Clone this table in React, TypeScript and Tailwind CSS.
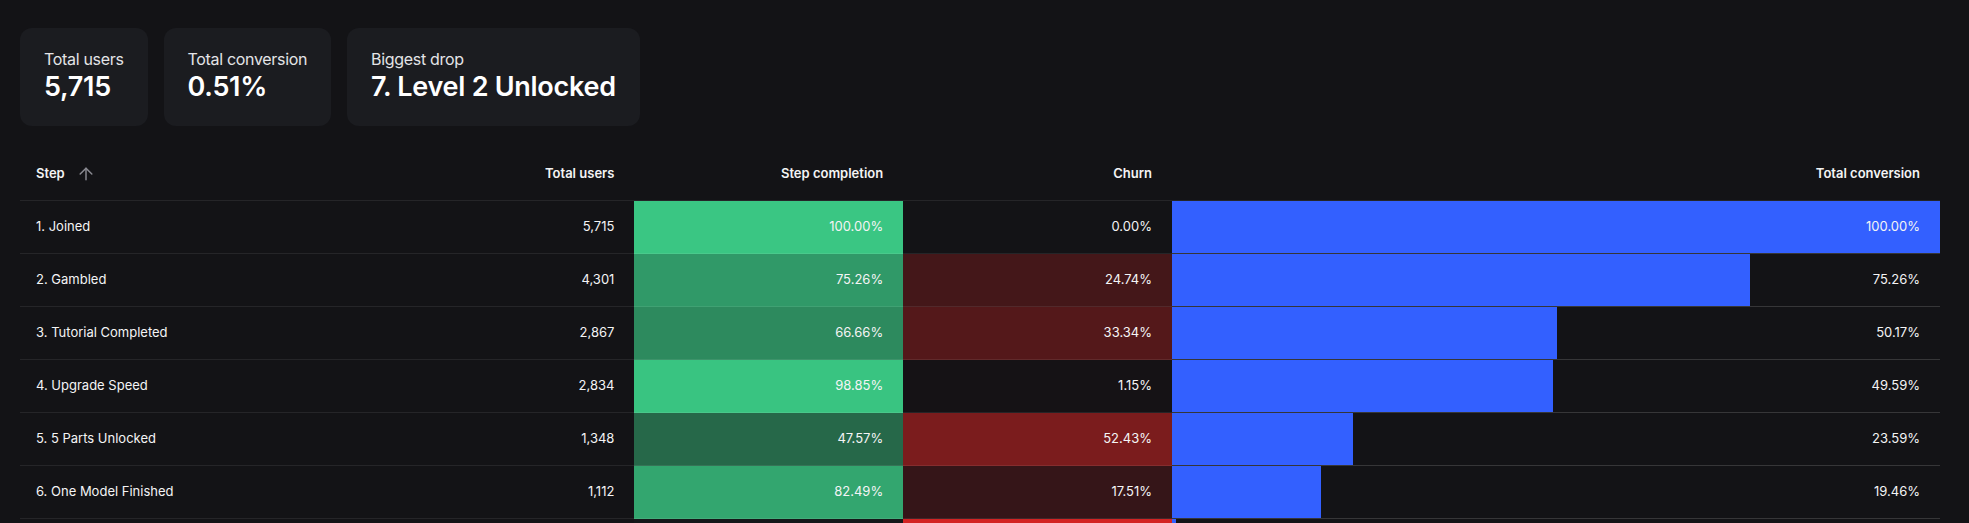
import { ArrowUp } from "lucide-react";

type Step = {
  name: string;
  users: string;
  completion: number;
  churn: number;
  conversion: number;
};

const steps: Step[] = [
  { name: "1. Joined", users: "5,715", completion: 100, churn: 0, conversion: 100 },
  { name: "2. Gambled", users: "4,301", completion: 75.26, churn: 24.74, conversion: 75.26 },
  { name: "3. Tutorial Completed", users: "2,867", completion: 66.66, churn: 33.34, conversion: 50.17 },
  { name: "4. Upgrade Speed", users: "2,834", completion: 98.85, churn: 1.15, conversion: 49.59 },
  { name: "5. 5 Parts Unlocked", users: "1,348", completion: 47.57, churn: 52.43, conversion: 23.59 },
  { name: "6. One Model Finished", users: "1,112", completion: 82.49, churn: 17.51, conversion: 19.46 },
  { name: "7. Level 2 Unlocked", users: "29", completion: 2.61, churn: 97.39, conversion: 0.51 },
];

function StatCard({ label, value }: { label: string; value: string }) {
  return (
    <div className="rounded-xl bg-[#1b1c20] px-6 pt-[19px] pb-[23px]">
      <div className="text-[16px] leading-6 tracking-[-0.02em] text-[#e4e4e7]">{label}</div>
      <div className="text-[27px] font-semibold leading-8 tracking-[-0.01em] text-white">{value}</div>
    </div>
  );
}

const cell = "h-[53px] flex items-center border-b border-white/[0.08] text-[13px]";

export default function App() {
  return (
    <div
      className="h-[523px] overflow-hidden bg-[#131316] pl-5 pr-[29px] pt-7 text-[#f4f4f5]"
      style={{ fontFamily: "Inter, 'Noto Sans', sans-serif" }}
    >
      <div className="flex gap-4">
        <StatCard label="Total users" value="5,715" />
        <StatCard label="Total conversion" value="0.51%" />
        <StatCard label="Biggest drop" value="7. Level 2 Unlocked" />
      </div>

      <div className="mt-[22px] w-full">
        {/* Header */}
        <div className="flex font-semibold">
          <div className={`${cell} h-[51px] w-[16%] gap-[11px] pl-4`}>
            Step
            <ArrowUp size={20} strokeWidth={1.75} className="text-[#8b8b92]" />
          </div>
          <div className={`${cell} h-[51px] w-[16%] justify-end pr-5`}>Total users</div>
          <div className={`${cell} h-[51px] w-[14%] justify-end pr-5`}>Step completion</div>
          <div className={`${cell} h-[51px] w-[14%] justify-end pr-5`}>Churn</div>
          <div className={`${cell} h-[51px] w-[40%] justify-end pr-5`}>Total conversion</div>
        </div>

        {steps.map((s) => (
          <div key={s.name} className="flex">
            <div className={`${cell} w-[16%] pl-4`}>{s.name}</div>
            <div className={`${cell} w-[16%] justify-end pr-5`}>{s.users}</div>
            <div
              className={`${cell} w-[14%] justify-end pr-5`}
              style={{ backgroundColor: `rgba(58, 198, 131, ${s.completion / 100})` }}
            >
              {s.completion.toFixed(2)}%
            </div>
            <div
              className={`${cell} w-[14%] justify-end pr-5`}
              style={{ backgroundColor: `rgba(217, 36, 36, ${s.churn / 100})` }}
            >
              {s.churn.toFixed(2)}%
            </div>
            <div className={`${cell} relative w-[40%] justify-end pr-5`}>
              <div
                className="absolute inset-y-0 left-0 bg-[#3360ff]"
                style={{ width: `${s.conversion}%` }}
              />
              <div className="absolute inset-x-0 bottom-[-1px] h-px bg-white/[0.08]" />
              <span className="relative">{s.conversion.toFixed(2)}%</span>
            </div>
          </div>
        ))}
      </div>
    </div>
  );
}
